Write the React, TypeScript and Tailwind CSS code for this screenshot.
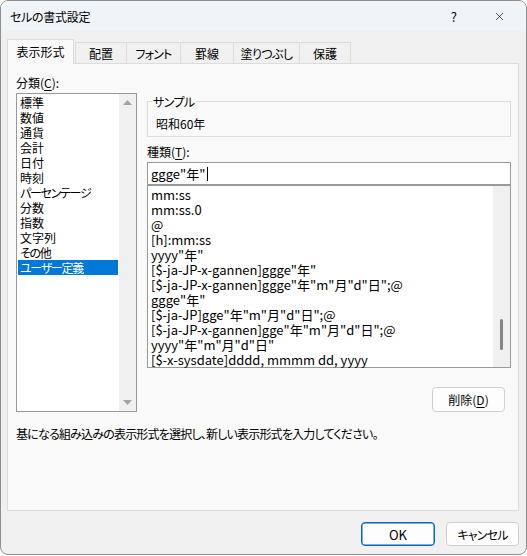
import { X } from "lucide-react";

const categories = [
  { label: "標準" },
  { label: "数値" },
  { label: "通貨" },
  { label: "会計" },
  { label: "日付" },
  { label: "時刻" },
  { label: "パーセンテージ", tight: true },
  { label: "分数" },
  { label: "指数" },
  { label: "文字列" },
  { label: "その他", tight: true },
  { label: "ユーザー定義", tight: true, selected: true },
];

const formats = [
  "mm:ss",
  "mm:ss.0",
  "@",
  "[h]:mm:ss",
  'yyyy"年"',
  '[$-ja-JP-x-gannen]ggge"年"',
  '[$-ja-JP-x-gannen]ggge"年"m"月"d"日";@',
  'ggge"年"',
  '[$-ja-JP]gge"年"m"月"d"日";@',
  '[$-ja-JP-x-gannen]gge"年"m"月"d"日";@',
  'yyyy"年"m"月"d"日"',
  "[$-x-sysdate]dddd, mmmm dd, yyyy",
];

const tabs = [
  { label: "配置", w: "w-[52px]" },
  { label: "フォント", w: "w-[55px] tracking-[-0.8px]" },
  { label: "罫線", w: "w-[54px]" },
  { label: "塗りつぶし", w: "w-[67px] tracking-[-0.6px]" },
  { label: "保護", w: "w-[52px]" },
];

function Triangle({ down }: { down?: boolean }) {
  return (
    <svg width="9" height="5" viewBox="0 0 9 5" className="block">
      <polygon
        points={down ? "0,0 9,0 4.5,5" : "0,5 9,5 4.5,0"}
        fill="#a3a3a3"
      />
    </svg>
  );
}

export default function App() {
  return (
    <div className="h-[556px] w-[527px] bg-white font-['Noto_Sans_CJK_JP',sans-serif] text-[12px] leading-[15px] text-black [font-feature-settings:'palt']">
      <div className="flex h-[555px] w-[527px] flex-col overflow-hidden rounded-[8px] border border-[#8f8f8f] bg-[#f0f0f0]">
        {/* title bar */}
        <div className="flex h-[30px] shrink-0 items-center justify-between bg-[#eef4f7] pl-[9px]">
          <span className="tracking-[-0.3px]">セルの書式設定</span>
          <div className="flex items-center">
            <span className="text-[13px]">?</span>
            <X className="ml-[36px] mr-[20px] size-[13px]" strokeWidth={1.2} />
          </div>
        </div>

        <div className="flex flex-col pl-[6px] pt-[8px]">
          {/* tabs */}
          <div className="relative z-10 -mb-px flex h-[25px] items-end">
            <div className="flex h-[25px] w-[67px] items-center justify-center border border-b-0 border-[#dcdcdc] bg-[#f9f9f9] pb-px">
              表示形式
            </div>
            <div className="ml-px flex">
              {tabs.map((t, i) => (
                <div
                  key={t.label}
                  className={`flex h-[22px] items-center justify-center border border-[#dcdcdc] bg-[#f0f0f0] ${t.w} ${i > 0 ? "-ml-px" : ""}`}
                >
                  {t.label}
                </div>
              ))}
            </div>
          </div>

          {/* panel */}
          <div className="flex h-[448px] w-[512px] flex-col border border-[#dcdcdc] bg-[#f9f9f9] pl-[8px] pt-[11px]">
            <div className="flex gap-[10px]">
              {/* category column */}
              <div className="flex w-[121px] flex-col">
                <div>
                  分類(<span className="underline underline-offset-2">C</span>):
                </div>
                <div className="mt-[3px] flex h-[319px] border border-[#999999] bg-white">
                  <div className="flex-1 px-px pt-px">
                    {categories.map((c) => (
                      <div
                        key={c.label}
                        className={`pl-[2px] ${c.tight ? "tracking-[-1.3px]" : ""} ${c.selected ? "bg-[#0078d7] text-white" : ""}`}
                      >
                        {c.label}
                      </div>
                    ))}
                  </div>
                  <div className="flex w-[17px] flex-col items-center justify-between bg-[#f0f0f0] py-[6px]">
                    <Triangle />
                    <Triangle down />
                  </div>
                </div>
              </div>

              {/* type column */}
              <div className="flex w-[364px] flex-col">
                <div className="relative mt-[26px] h-[36px] border border-[#dcdcdc] pl-[8px] pt-[14px]">
                  <span className="absolute -top-[8px] left-[4px] bg-[#f9f9f9] px-px tracking-[-0.6px]">
                    サンプル
                  </span>
                  昭和60年
                </div>
                <div className="mt-[7px]">
                  種類(<span className="underline underline-offset-2">T</span>):
                </div>
                <div className="mt-[3px] flex h-[23px] items-center border border-[#999999] bg-white pl-[3px] text-[13px]">
                  ggge"年"
                  <span className="ml-[2px] inline-block h-[14px] w-px bg-black" />
                </div>
                <div className="flex h-[183px] border border-[#999999] bg-white">
                  <div className="flex-1 pl-[3px] pt-[1px] text-[13px]">
                    {formats.map((f) => (
                      <div key={f} className="whitespace-nowrap">
                        {f}
                      </div>
                    ))}
                  </div>
                  <div className="flex w-[17px] flex-col items-center bg-[#f0f0f0] pt-[133px]">
                    <div className="h-[31px] w-[3px] rounded-full bg-[#858585]" />
                  </div>
                </div>
                <button className="mr-[6px] mt-[19px] flex h-[25px] w-[73px] items-center justify-center self-end rounded-[4px] border border-[#d0d0d0] bg-[#fdfdfd]">
                  削除(<span className="underline underline-offset-2">D</span>)
                </button>
              </div>
            </div>
            <div className="mt-[14px] tracking-[-0.8px]">
              基になる組み込みの表示形式を選択し、新しい表示形式を入力してください。
            </div>
          </div>
        </div>

        {/* footer */}
        <div className="mt-[11px] flex justify-end gap-[11px] pr-[7px]">
          <button className="flex h-[24px] w-[74px] items-center justify-center rounded-[4px] border border-[#0067c0] bg-[#fdfdfd] text-[13px] shadow-[inset_0_0_0_0.5px_#0067c0]">
            OK
          </button>
          <button className="flex h-[24px] w-[73px] items-center justify-center rounded-[4px] border border-[#d0d0d0] bg-[#fdfdfd] tracking-[-0.8px]">
            キャンセル
          </button>
        </div>
      </div>
    </div>
  );
}
